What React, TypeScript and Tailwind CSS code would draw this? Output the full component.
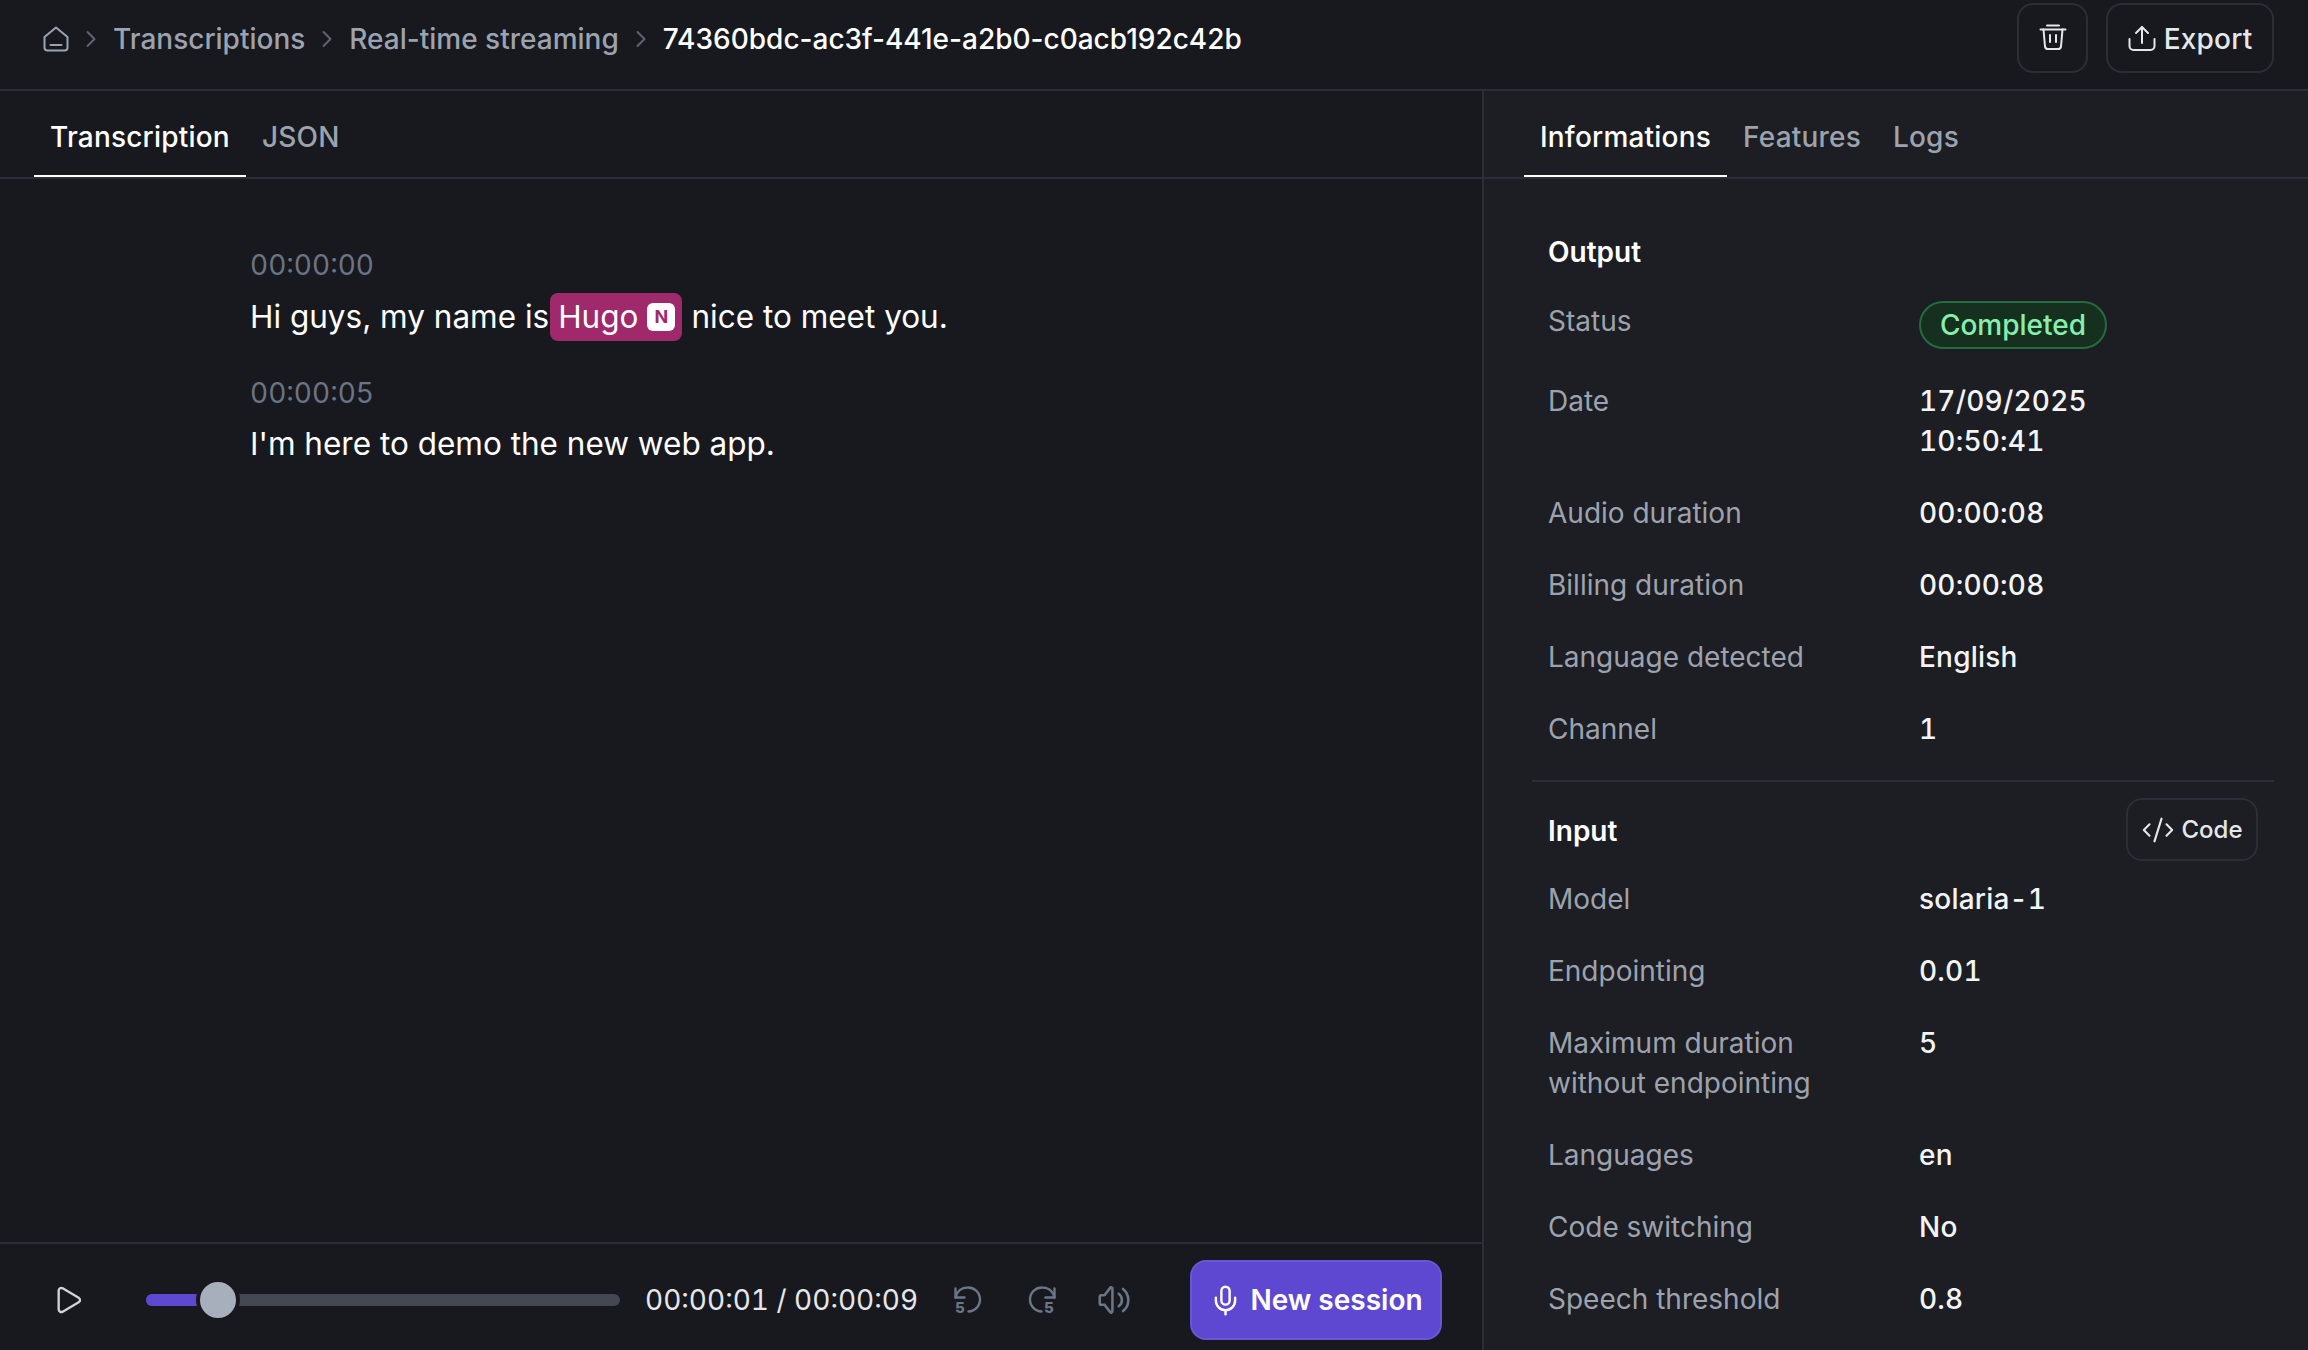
import { ChevronRight, CodeXml, Mic, Play } from "lucide-react"
import { TbVolume } from "react-icons/tb"

function HomeIcon() {
  return (
    <svg width="26" height="26" viewBox="0 0 26 26" fill="none" stroke="currentColor" strokeWidth="2" strokeLinejoin="round" strokeLinecap="round">
      <path d="M1.5 11 13 1.5 24.5 11v10.5a3 3 0 0 1-3 3h-17a3 3 0 0 1-3-3z" />
      <path d="M7.5 19h11" />
    </svg>
  )
}

function TrashIcon() {
  return (
    <svg width="28" height="28" viewBox="0 0 28 28" fill="none" stroke="currentColor" strokeWidth="2" strokeLinejoin="round" strokeLinecap="round">
      <path d="M8 1.5h12" />
      <path d="M1.5 5.5h25" />
      <path d="m4.5 5.5 1.5 17a3 3 0 0 0 3 2.5h10a3 3 0 0 0 3-2.5l1.5-17" />
      <path d="M11 11v7" />
      <path d="M17 11v7" />
    </svg>
  )
}

function ExportIcon() {
  return (
    <svg width="28" height="28" viewBox="0 0 28 28" fill="none" stroke="currentColor" strokeWidth="2" strokeLinejoin="round" strokeLinecap="round">
      <path d="M1.5 14v7a4 4 0 0 0 4 4h17a4 4 0 0 0 4-4v-7" />
      <path d="M14 18V2" />
      <path d="m8 8 6-6 6 6" />
    </svg>
  )
}

function RewindIcon({ forward }: { forward?: boolean }) {
  return (
    <svg width="30" height="32" viewBox="0 0 30 32" fill="none" stroke="currentColor" strokeWidth="2.4" strokeLinejoin="round" strokeLinecap="round">
      {forward ? (
        <>
          <path d="M27.5 2.5v9h-9" />
          <path d="M27.5 11.5C26 5 21 1.5 15.5 1.5a12 12 0 0 0-1 24" />
          <text x="17" y="27" fontSize="15" fontWeight="800" fill="currentColor" stroke="none">5</text>
        </>
      ) : (
        <>
          <path d="M2.5 2.5v9h9" />
          <path d="M2.5 11.5C4 5 9 1.5 14.5 1.5a12 12 0 0 1 1 24" />
          <text x="2" y="27" fontSize="15" fontWeight="800" fill="currentColor" stroke="none">5</text>
        </>
      )}
    </svg>
  )
}

function Crumb({ label }: { label: string }) {
  return (
    <>
      <ChevronRight size={28} strokeWidth={1.7} className="text-[#5f6470]" />
      <span className="text-[#9ca3af]">{label}</span>
    </>
  )
}

function Tab({ label, active }: { label: string; active?: boolean }) {
  return (
    <div
      className={
        active
          ? "flex h-[86px] items-center border-b-2 border-white px-4 pt-2 text-white"
          : "flex h-[86px] items-center border-b-2 border-transparent px-4 pt-2 text-[#9ca3af]"
      }
    >
      {label}
    </div>
  )
}

function Row({ label, children }: { label: React.ReactNode; children: React.ReactNode }) {
  return (
    <div className="flex text-[28px] leading-[40px]">
      <div className="w-[371px] shrink-0 text-[#9ca3af]">{label}</div>
      <div className="font-medium tracking-[0.2px] text-[#f3f4f6] tabular-nums">{children}</div>
    </div>
  )
}

export default function App() {
  return (
    <div className="flex h-[1350px] w-[2308px] flex-col overflow-hidden bg-[#17191e] font-['Inter',sans-serif] text-white">
      <header className="flex h-[91px] shrink-0 items-center justify-between border-b-2 border-[#2b2e37] pr-[34px] pb-[13px] pl-[43px]">
        <div className="mt-[2px] flex items-center gap-2 text-[28px] leading-[40px] font-medium">
          <span className="text-[#9ca3af]"><HomeIcon /></span>
          <Crumb label="Transcriptions" />
          <Crumb label="Real-time streaming" />
          <ChevronRight size={28} strokeWidth={1.7} className="text-[#5f6470]" />
          <span className="text-white">74360bdc-ac3f-441e-a2b0-c0acb192c42b</span>
        </div>
        <div className="flex gap-[18px]">
          <button className="flex h-[70px] w-[71px] items-center justify-center rounded-2xl border-2 border-[#2b2e37] text-[#e5e7eb]">
            <TrashIcon />
          </button>
          <button className="flex h-[70px] w-[168px] items-center justify-center gap-2 rounded-2xl border-2 border-[#2b2e37] pt-px text-[28px] font-medium tracking-[0.2px] text-[#e5e7eb]">
            <ExportIcon />
            Export
          </button>
        </div>
      </header>

      <div className="flex min-h-0 flex-1">
        <main className="flex w-[1484px] shrink-0 flex-col border-r-2 border-[#2b2e37]">
          <nav className="flex h-[88px] shrink-0 border-b-2 border-[#2b2e37] pl-[34px] text-[28px] font-medium tracking-[0.2px]">
            <Tab label="Transcription" active />
            <Tab label="JSON" />
          </nav>
          <div className="flex-1 pt-[66px] pl-[250px] text-[31.5px] leading-[48px]">
            <div className="text-[28px] leading-[40px] text-[#6b7485] tabular-nums">00:00:00</div>
            <p className="mt-[8px] flex items-center text-white">
              Hi guys, my name is
              <span className="ml-px flex h-[48px] items-center gap-[9px] rounded-lg bg-[#a0296b] pr-[7px] pl-2">
                Hugo
                <span className="flex h-7 w-7 items-center justify-center rounded-md bg-white text-[18px] font-bold text-[#a0296b]">N</span>
              </span>
              <span className="ml-[9px]">nice to meet you.</span>
            </p>
            <div className="mt-[32px] text-[28px] leading-[40px] text-[#6b7485] tabular-nums">00:00:05</div>
            <p className="mt-[7px] text-white">I'm here to demo the new web app.</p>
          </div>
          <footer className="flex h-[108px] shrink-0 items-center border-t-2 border-[#2b2e37] pt-[6px] pr-[40px] pl-[52px]">
            <Play size={32} strokeWidth={1.75} className="text-[#d1d5db]" />
            <div className="relative ml-[62px] h-3 w-[474px] shrink-0 rounded-full bg-[#434853]">
              <div className="h-3 w-[54px] rounded-l-full bg-[#5e48d1]" />
              <div className="absolute top-[-16px] left-[50px] h-[44px] w-[44px] rounded-full border-[4px] border-[#17191e] bg-[#a8afbc]" />
            </div>
            <span className="ml-[25px] text-[28px] text-[#e5e7eb] tabular-nums">00:00:01 / 00:00:09</span>
            <span className="mt-1 ml-[35px] flex text-[#6b7686]"><RewindIcon /></span>
            <span className="mt-1 ml-[44px] flex text-[#6b7686]"><RewindIcon forward /></span>
            <TbVolume size={38} strokeWidth={1.6} className="ml-[38px] text-[#6b7686]" />
            <button className="ml-auto flex h-[80px] w-[252px] items-center justify-center gap-2 rounded-2xl border-2 border-[#6a55d6] bg-[#5e48d1] text-[28px] font-semibold text-white">
              <Mic size={33} strokeWidth={1.75} />
              New session
            </button>
          </footer>
        </main>

        <aside className="min-w-0 flex-1 bg-[#1c1e23]">
          <nav className="flex h-[88px] border-b-2 border-[#2b2e37] pl-[40px] text-[28px] font-medium tracking-[0.2px]">
            <Tab label="Informations" active />
            <Tab label="Features" />
            <Tab label="Logs" />
          </nav>
          <div className="pt-[53px] pr-[34px] pl-[64px]">
            <div className="flex flex-col gap-[32px]">
              <h3 className="mb-[-3px] text-[28px] leading-[40px] font-semibold text-white">Output</h3>
              <Row label="Status">
                <span className="inline-flex h-[48px] w-[188px] items-center justify-center rounded-full border-2 border-[#256b3f] bg-[#163020] font-medium tracking-normal text-[#86efac]">Completed</span>
              </Row>
              <Row label="Date">17/09/2025<br />10:50:41</Row>
              <Row label="Audio duration">00:00:08</Row>
              <Row label="Billing duration">00:00:08</Row>
              <Row label="Language detected">English</Row>
              <Row label="Channel">1</Row>
            </div>
            <div className="mt-[31px] ml-[-16px] border-t-2 border-[#2b2e37]" />
            <div className="mt-[29px] flex flex-col gap-[32px]">
              <div className="mb-[-4px] flex h-[40px] items-center justify-between">
                <h3 className="text-[28px] font-semibold text-white">Input</h3>
                <button className="mr-[16px] mb-[3px] flex h-[63px] w-[132px] shrink-0 items-center justify-center gap-[6px] rounded-2xl border-2 border-[#2b2e37] text-[24px] font-medium text-[#e5e7eb]">
                  <CodeXml size={34} strokeWidth={1.5} />
                  Code
                </button>
              </div>
              <Row label="Model">solaria-1</Row>
              <Row label="Endpointing">0.01</Row>
              <Row label={<>Maximum duration<br />without endpointing</>}>5</Row>
              <Row label="Languages">en</Row>
              <Row label="Code switching">No</Row>
              <Row label="Speech threshold">0.8</Row>
            </div>
          </div>
        </aside>
      </div>
    </div>
  )
}
